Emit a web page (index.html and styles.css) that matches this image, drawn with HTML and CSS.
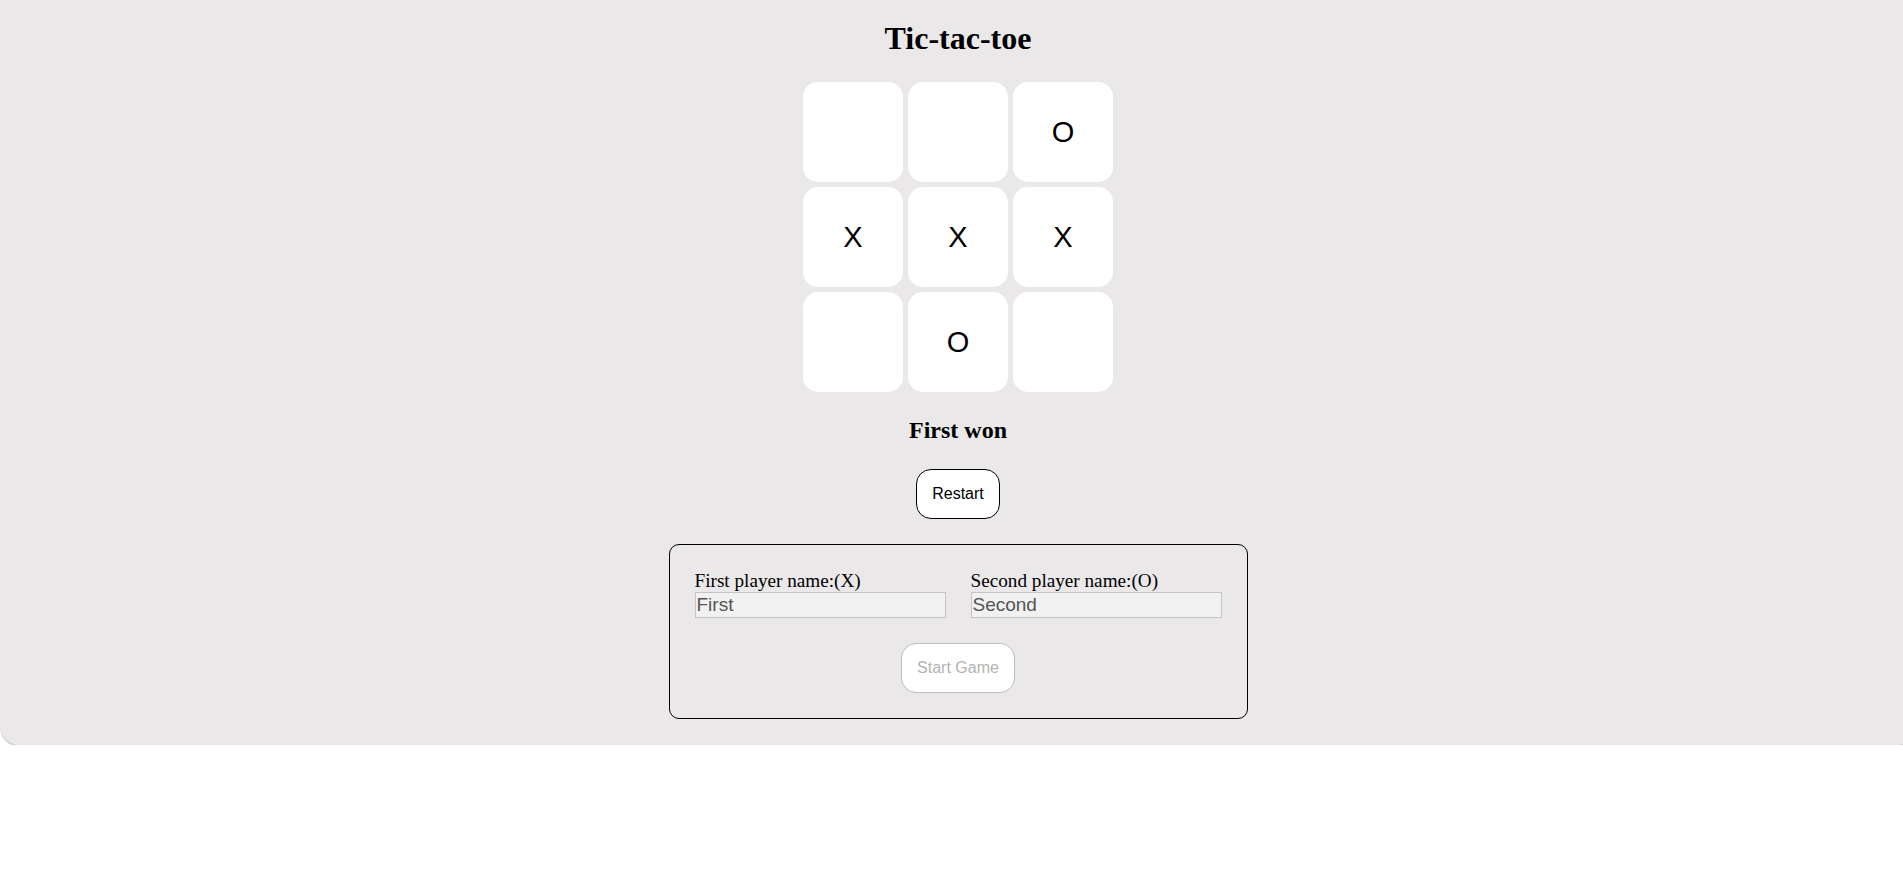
FILE: index.html
```html
<!DOCTYPE html>
<html lang="en">
<head>
    <meta charset="UTF-8">
    <title>Tic-tac-toe</title>
    <link rel="stylesheet" href="styles.css">
</head>
<body>
    <div class="game">
        <h1>Tic-tac-toe</h1>

        <div class="board">
            <div class="cell"></div>
            <div class="cell"></div>
            <div class="cell">O</div>
            <div class="cell">X</div>
            <div class="cell">X</div>
            <div class="cell">X</div>
            <div class="cell"></div>
            <div class="cell">O</div>
            <div class="cell"></div>
        </div>

        <h2 class="status">First won</h2>

        <button class="restart">Restart</button>

        <form class="players">
            <div class="fields">
                <div class="field">
                    <label for="player1">First player name:(X)</label>
                    <input id="player1" type="text" value="First" disabled>
                </div>
                <div class="field">
                    <label for="player2">Second player name:(O)</label>
                    <input id="player2" type="text" value="Second" disabled>
                </div>
            </div>
            <button class="start" type="button" disabled>Start Game</button>
        </form>
    </div>
</body>
</html>
```

FILE: styles.css
```css
body { margin: 0; overflow-x: hidden; background: #fff; font-family: "Liberation Serif", serif; }
.game { width: 100vw; padding: 20px 6.5px 26px; display: flex; flex-direction: column; align-items: center; gap: 24px; background-color: #eae8e9; border-radius: 0 0 20px 20px; box-shadow: 0 2px 1px rgba(0, 0, 0, 0.18); }
h1 { margin: 0; font-size: 32px; }
.board { display: grid; grid-template-columns: repeat(3, 100px); grid-auto-rows: 100px; gap: 5px; margin-top: 1px; }
.cell { display: flex; align-items: center; justify-content: center; background: #fff; border-radius: 15px; font-family: "Liberation Sans", Arial, sans-serif; font-size: 29px; }
.status { margin: 1px 0 0; font-size: 24px; }
button { font-family: "Liberation Sans", Arial, sans-serif; font-size: 16px; padding: 15px; background: #fff; border-radius: 15px; cursor: pointer; }
.restart { border: 1px solid #000; color: #000; margin-top: 1px; }
.players { width: 527px; padding: 25px; margin-top: 1px; border: 1px solid #000; border-radius: 10px; display: flex; flex-direction: column; align-items: center; gap: 25px; }
.fields { width: 100%; display: grid; grid-template-columns: 1fr 1fr; gap: 25px; }
label { display: block; font-size: 19.2px; color: #000; }
input { display: block; width: 100%; box-sizing: border-box; margin: 0; padding: 1px 1px; font-family: "Liberation Sans", Arial, sans-serif; font-size: 19px; color: #555; background: #f1f1f1; border: 1px solid #c4c4c4; }
.start { color: #b3b3b3; border: 1px solid #bdbdbd; cursor: default; }
```
